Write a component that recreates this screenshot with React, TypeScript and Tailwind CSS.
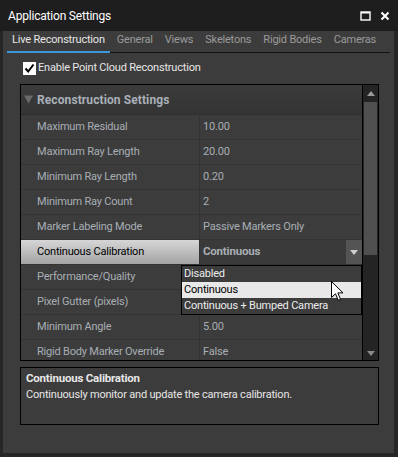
import React from "react";

const rows: [string, string][] = [
  ["Maximum Residual", "10.00"],
  ["Maximum Ray Length", "20.00"],
  ["Minimum Ray Length", "0.20"],
  ["Minimum Ray Count", "2"],
  ["Marker Labeling Mode", "Passive Markers Only"],
  ["Continuous Calibration", "Continuous"],
  ["Performance/Quality", ""],
  ["Pixel Gutter (pixels)", ""],
  ["Minimum Angle", "5.00"],
  ["Rigid Body Marker Override", "False"],
];

const font = { fontFamily: "Roboto, 'Liberation Sans', sans-serif" };

export default function App() {
  return (
    <div
      className="relative w-[398px] h-[457px] bg-[#262626] flex flex-col overflow-hidden select-none tracking-[-0.2px]"
      style={font}
    >
      {/* Title bar */}
      <div className="h-[31px] bg-[#1e1e1e] flex items-center pl-[8px] pr-[8px] shrink-0">
        <span className="text-[12px] text-white whitespace-nowrap">Application Settings</span>
        <div className="ml-auto flex items-center gap-[9px]">
          <svg width="11" height="10" viewBox="0 0 11 10">
            <rect x="1" y="1" width="9" height="8" fill="none" stroke="#fff" strokeWidth="1.4" />
            <rect x="1" y="1" width="9" height="1.5" fill="#fff" />
          </svg>
          <svg width="10" height="10" viewBox="0 0 10 10">
            <path d="M1.5 1.5 L8.5 8.5 M8.5 1.5 L1.5 8.5" stroke="#fff" strokeWidth="2" />
          </svg>
        </div>
      </div>

      {/* Body */}
      <div className="flex-1 ml-[3px] mr-[4px] mb-[4px] bg-[#3c3c3c] flex flex-col">
        {/* Tabs */}
        <div className="h-[21px] mt-[1px] mx-[4px] flex items-end gap-[2px] border-b border-[#111] text-[11px] whitespace-nowrap">
          <div className="px-[5px] pb-[3px] text-[#e6e6e6] border-b-2 border-[#3a97d8] -mb-[1px]">
            Live Reconstruction
          </div>
          <div className="px-[5px] pb-[4px] text-[#9a9a9a]">General</div>
          <div className="px-[5px] pb-[4px] text-[#9a9a9a]">Views</div>
          <div className="px-[5px] pb-[4px] text-[#9a9a9a]">Skeletons</div>
          <div className="px-[5px] pb-[4px] text-[#9a9a9a]">Rigid Bodies</div>
          <div className="px-[5px] pb-[4px] text-[#9a9a9a]">Cameras</div>
        </div>

        {/* Checkbox */}
        <div className="flex items-center mt-[8px] ml-[20px] h-[14px]">
          <div className="w-[13px] h-[13px] bg-white flex items-center justify-center">
            <svg width="11" height="11" viewBox="0 0 11 11">
              <path d="M1.5 5.5 L4.2 8.5 L9.5 1.5" fill="none" stroke="#000" strokeWidth="2" />
            </svg>
          </div>
          <span className="ml-[2px] text-[11px] text-[#e6e6e6] whitespace-nowrap">Enable Point Cloud Reconstruction</span>
        </div>

        {/* Property grid */}
        <div className="mt-[9px] ml-[17px] w-[359px] h-[277px] border border-black flex">
          <div className="flex-1 flex flex-col overflow-hidden">
            <div className="h-[30px] shrink-0 flex items-center bg-gradient-to-b from-[#3b3b3b] to-[#343434] border-b border-[#2e2e2e]">
              <svg width="10" height="9" viewBox="0 0 10 9" className="ml-[3px]">
                <path d="M0 0.5 L9 0.5 L4.5 8.5 Z" fill="#6b6b6b" />
              </svg>
              <span className="ml-[3px] text-[12px] font-bold text-[#a9b0b7] tracking-[0.1px] whitespace-nowrap">Reconstruction Settings</span>
            </div>
            {rows.map(([k, v], i) => {
              const sel = k === "Continuous Calibration";
              return (
                <div key={i} className="h-[25px] shrink-0 flex border-b border-[#333]">
                  <div
                    className={
                      "w-[179px] shrink-0 flex items-center pl-[16px] text-[11px] whitespace-nowrap border-r border-[#333] " +
                      (sel
                        ? "bg-gradient-to-b from-[#d6d6d6] to-[#a4a4a4] text-black"
                        : "bg-[#3c3c3c] text-[#a8aeb4]")
                    }
                  >
                    {k}
                  </div>
                  <div className={"flex-1 flex items-center pl-[3px] text-[11px] whitespace-nowrap " + (sel ? "bg-[#3a3a3a]" : "bg-[#3c3c3c]")}>
                    <span className={sel ? "font-bold text-[#a8aeb4] text-[11.5px]" : "text-[#a8aeb4]"}>{v}</span>
                    {sel && (
                      <div className="ml-auto w-[16px] h-[24px] bg-[#545454] flex items-center justify-center">
                        <svg width="8" height="5" viewBox="0 0 8 5">
                          <path d="M0 0 L8 0 L4 5 Z" fill="#cfcfcf" />
                        </svg>
                      </div>
                    )}
                  </div>
                </div>
              );
            })}
          </div>
          {/* Scrollbar */}
          <div className="w-[16px] shrink-0 border-l border-black bg-[#242424] flex flex-col">
            <div className="h-[17px] flex items-center justify-center">
              <svg width="8" height="5" viewBox="0 0 8 5">
                <path d="M0 5 L8 5 L4 0 Z" fill="#9a9a9a" />
              </svg>
            </div>
            <div className="h-[153px] mx-[1px] bg-[#505050]" />
            <div className="flex-1" />
            <div className="h-[14px] flex items-center justify-center">
              <svg width="8" height="5" viewBox="0 0 8 5">
                <path d="M0 0 L8 0 L4 5 Z" fill="#8a8a8a" />
              </svg>
            </div>
          </div>
        </div>

        {/* Description */}
        <div className="mt-[6px] ml-[17px] w-[359px] h-[58px] border border-black px-[5px] pt-[3px]">
          <div className="text-[11.5px] font-bold text-[#e6e6e6] leading-[15px]">Continuous Calibration</div>
          <div className="text-[11px] text-[#e6e6e6] leading-[17px]">Continuously monitor and update the camera calibration.</div>
        </div>
      </div>

      {/* Dropdown popup */}
      <div className="absolute left-[181px] top-[265px] w-[181px] h-[50px] border border-black bg-[#3c3c3c] flex flex-col text-[11px] whitespace-nowrap">
        <div className="h-[16px] flex items-center pl-[2px] text-[#ececec]">Disabled</div>
        <div className="h-[16px] flex items-center pl-[2px] bg-[#e8e8e8] text-black">Continuous</div>
        <div className="h-[16px] flex items-center pl-[2px] text-[#ececec]">Continuous + Bumped Camera</div>
      </div>

      {/* Cursor */}
      <svg className="absolute left-[331px] top-[281px]" width="13" height="21" viewBox="0 0 13 21">
        <path d="M0.5 0.5 L0.5 16.5 L4.5 12.8 L7.3 19.3 L9.6 18.3 L6.8 11.9 L12 11.9 Z" fill="#fff" stroke="#000" strokeWidth="1" />
      </svg>
    </div>
  );
}
